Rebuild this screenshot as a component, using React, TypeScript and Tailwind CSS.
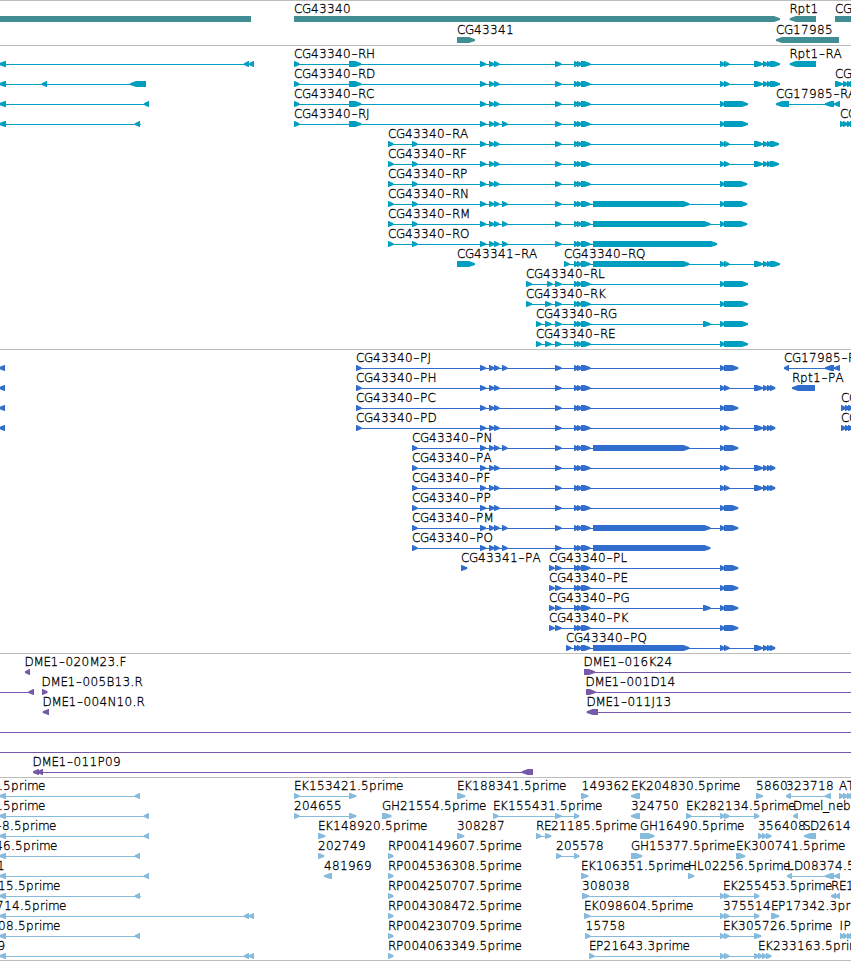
import React from "react";

// dir: 1 points right, -1 points left, 0 is a plain block
type Exon = [start: number, end: number];
type Feature = { label?: string; at?: number; dir: 1 | -1 | 0; line?: Exon; exons: Exon[] };
type Row = Feature[];

// Horizontal advance of each label character, in pixels
const ADVANCE: Record<string, number> = {
  A: 8, B: 8, C: 8, D: 9, E: 7, F: 7, G: 9, H: 9, I: 4, J: 4, K: 8, L: 7, M: 10, N: 9,
  O: 9, P: 7.5, Q: 9, R: 8, S: 7, T: 8, p: 8, t: 5, r: 5, i: 3, m: 11, e: 7, n: 8, b: 8,
  l: 3, _: 5, ".": 4, "-": 7,
};

function charPositions(text: string, start: number) {
  let x = start;
  return Array.from(text).map((c) => {
    const here = x;
    x += ADVANCE[c] ?? 8;
    return here;
  });
}

// Hyphens are set larger than the rest so that they read as a wide dash
function Label({ text, at }: { text: string; at: number }) {
  const xs = charPositions(text, at);
  const cut = text.indexOf("-");
  if (cut < 0) {
    return (
      <text x={xs.join(" ")} y="9" className="fill-black stroke-black [stroke-width:0.3px]">
        {text}
      </text>
    );
  }
  const before = text.slice(0, cut);
  return (
    <text y="9" className="fill-black stroke-black [stroke-width:0.3px]">
      {before && <tspan x={xs.slice(0, cut).join(" ")}>{before}</tspan>}
      <tspan x={xs[cut] + 0.3} y="10" className="text-[18px] [stroke-width:0.1px]">
        -
      </tspan>
      <tspan x={xs.slice(cut + 1).join(" ")} y="9">
        {text.slice(cut + 1)}
      </tspan>
    </text>
  );
}

function f(label: string, at: number, dir: 1 | -1 | 0, ...exons: Exon[]): Feature {
  return { label, at, dir, exons };
}

// The arrow head ends in a blunt tip just above the connecting line
function exonPoints([a, b]: Exon, dir: number, top: number) {
  const h = 6;
  const head = Math.min(b - a - 0.6, 6);
  const t1 = top + 2.2;
  const t2 = top + 4;
  if (dir === 0) return `${a},${top} ${b},${top} ${b},${top + h} ${a},${top + h}`;
  if (dir === 1)
    return `${a},${top} ${b - head},${top} ${b},${t1} ${b},${t2} ${b - head},${top + h} ${a},${top + h}`;
  return `${b},${top} ${a + head},${top} ${a},${t1} ${a},${t2} ${a + head},${top + h} ${b},${top + h}`;
}

function TrackRow({ row }: { row: Row }) {
  const top = 12;
  return (
    <svg width="851" height="20" className="block h-5 w-full shrink-0 overflow-visible">
      {row.map((ft, i) => {
        const span =
          ft.line ??
          (ft.exons.length > 1
            ? [ft.exons[0][0] + 2, ft.exons[ft.exons.length - 1][1] - 1]
            : null);
        return (
          <g key={i}>
            {span && (
              <rect x={span[0]} y={top + 3} width={span[1] - span[0]} height="1" fill="currentColor" />
            )}
            {ft.exons.map((e, j) => (
              <polygon key={j} points={exonPoints(e, ft.dir, top)} fill="currentColor" />
            ))}
            {ft.label && <Label text={ft.label} at={ft.at ?? ft.exons[0][0]} />}
          </g>
        );
      })}
    </svg>
  );
}

function Track({ rows, className }: { rows: Row[]; className: string }) {
  return (
    <section className={`flex shrink-0 flex-col border-t border-[#bdbdbd] pt-[3px] ${className}`}>
      {rows.map((r, i) => (
        <TrackRow key={i} row={r} />
      ))}
    </section>
  );
}

// Exons shared by the CG43340 splice variants
const mid: Exon[] = [[480, 486], [489, 494.5], [494, 499.5]];
const extra: Exon = [502, 507.5];
const f55: Exon = [555, 561.5];
const trio: Exon[] = [[574, 579], [577, 582], [581, 590.5]];
const pair: Exon[] = [[720, 725], [724, 729.5]];
const tail: Exon[] = [[754, 763], [763, 768], [767, 772]];
const stub: Exon = [720, 725];
const longN: Exon = [593, 689.5];
const longM: Exon = [593, 710.5];
const a0: Exon = [294, 299.5];
const b0: Exon = [349, 361.3];
const c0: Exon = [388, 393.5];
const d0: Exon = [412, 417.5];
const p0: Exon = [356, 361.5];
const edge: Exon = [-1, 6];

const left = (line: number, ...exons: Exon[]): Feature => ({ dir: -1, line: [0, line], exons: [edge, ...exons] });

const genes: Row[] = [
  [
    { dir: 0, exons: [[0, 251]] },
    f("CG43340", 294, 1, [294, 780]),
    f("Rpt1", 789.5, -1, [789.7, 816]),
    f("CG", 835, 1, [835, 900]),
  ],
  [f("CG43341", 457, 1, [457, 475]), f("CG17985", 776, -1, [776, 839])],
];

const transcripts: Row[] = [
  [
    left(254, [244, 249], [249, 254]),
    f("CG43340-RH", 294, 1, a0, b0, ...mid, f55, ...trio, ...pair, ...tail, [770, 780]),
    f("Rpt1-RA", 789.5, -1, [789.7, 816]),
  ],
  [
    left(146, [41.7, 47], [130, 146]),
    f("CG43340-RD", 294, 1, a0, b0, ...mid, f55, ...trio, ...pair, ...tail, [770, 780]),
    f("CG", 835, 1, [835, 843], [843, 848], [847, 853], [850, 856]),
  ],
  [
    left(149, [144, 149]),
    f("CG43340-RC", 294, 1, a0, b0, ...mid, f55, ...trio, stub, [724, 748]),
    f("CG17985-RA", 776, -1, [776, 789], [825, 834], [834, 840]),
  ],
  [
    left(141, [135, 140]),
    f("CG43340-RJ", 294, 1, a0, b0, ...mid, extra, f55, ...trio, stub, [724, 748]),
    f("CG", 840, 1, [840, 845], [843, 848], [847, 852], [850, 856]),
  ],
  [f("CG43340-RA", 388, 1, c0, d0, ...mid, f55, ...trio, ...pair, ...tail, [770, 779])],
  [f("CG43340-RF", 388, 1, c0, d0, ...mid, f55, ...trio, ...pair, ...tail, [770, 779])],
  [f("CG43340-RP", 388, 1, c0, d0, ...mid, f55, ...trio, stub, [724, 747.3])],
  [f("CG43340-RN", 388, 1, c0, d0, ...mid, extra, f55, ...trio, longN, stub, [724, 747.3])],
  [f("CG43340-RM", 388, 1, c0, d0, ...mid, extra, f55, ...trio, longM, stub, [724, 747.3])],
  [f("CG43340-RO", 388, 1, c0, d0, ...mid, extra, f55, ...trio, [593, 717.2])],
  [
    f("CG43341-RA", 457, 1, [457, 475]),
    f("CG43340-RQ", 564, 1, [564, 569.5], ...trio, longN, ...pair, ...tail, [770, 780]),
  ],
  [f("CG43340-RL", 526, 1, [526, 532], [547, 552.5], f55, ...trio, stub, [724, 748])],
  [f("CG43340-RK", 526, 1, [526, 532], [545, 551.5], f55, ...trio, stub, [724, 748])],
  [f("CG43340-RG", 536, 1, [536, 541.5], [545, 551.5], f55, ...trio, [703, 710.7], stub, [724, 748])],
  [f("CG43340-RE", 536, 1, [536, 541.5], [545, 551.5], f55, ...trio, stub, [724, 748])],
];

const end738: Exon[] = [stub, [724, 738.3]];
const end775: Exon[] = [...pair, ...tail, [770, 775.3]];
const clip: Feature = { dir: -1, exons: [[-1, 5]] };
const pStart: Exon = [549, 554.5];

const proteins: Row[] = [
  [
    clip,
    f("CG43340-PJ", 356, 1, p0, ...mid, extra, f55, ...trio, ...end738),
    f("CG17985-PA", 784, -1, [784, 789], [825, 834], [834, 840]),
  ],
  [clip, f("CG43340-PH", 356, 1, p0, ...mid, f55, ...trio, ...end775), f("Rpt1-PA", 792, -1, [792, 815])],
  [
    clip,
    f("CG43340-PC", 356, 1, p0, ...mid, f55, ...trio, ...end738),
    f("CG", 841, 1, [841, 846], [845, 850], [848, 854]),
  ],
  [
    clip,
    f("CG43340-PD", 356, 1, p0, ...mid, f55, ...trio, ...end775),
    f("CG", 841, 1, [841, 846], [845, 850], [848, 854]),
  ],
  [f("CG43340-PN", 412, 1, d0, ...mid, extra, f55, ...trio, longN, ...end738)],
  [f("CG43340-PA", 412, 1, d0, ...mid, f55, ...trio, ...end775)],
  [f("CG43340-PF", 412, 1, d0, ...mid, f55, ...trio, ...end775)],
  [f("CG43340-PP", 412, 1, d0, ...mid, f55, ...trio, ...end738)],
  [f("CG43340-PM", 412, 1, d0, ...mid, extra, f55, ...trio, longM, ...end738)],
  [f("CG43340-PO", 412, 1, d0, ...mid, extra, f55, ...trio, longM)],
  [f("CG43341-PA", 461, 1, [461, 467.3]), f("CG43340-PL", 549, 1, pStart, f55, ...trio, ...end738)],
  [f("CG43340-PE", 549, 1, pStart, f55, ...trio, ...end738)],
  [f("CG43340-PG", 549, 1, pStart, f55, ...trio, [703, 710.7], ...end738)],
  [f("CG43340-PK", 549, 1, pStart, f55, ...trio, ...end738)],
  [f("CG43340-PQ", 566, 1, [566, 571.5], ...trio, longN, ...end775)],
];

const clones: Row[] = [
  [
    f("DME1-020M23.F", 24.5, -1, [25, 30]),
    { label: "DME1-016K24", at: 583.5, dir: 1, line: [584, 851], exons: [[584, 595]] },
  ],
  [
    { dir: -1, line: [0, 30], exons: [[28.5, 34]] },
    f("DME1-005B13.R", 41.5, 1, [42, 47.5]),
    { label: "DME1-001D14", at: 585.5, dir: 1, line: [586, 851], exons: [[586, 595.5]] },
  ],
  [
    f("DME1-004N10.R", 42.5, -1, [42.7, 49]),
    { label: "DME1-011J13", at: 586.5, dir: -1, line: [590, 851], exons: [[586.7, 598]] },
  ],
  [{ dir: 0, line: [0, 851], exons: [] }],
  [{ dir: 0, line: [0, 851], exons: [] }],
  [
    { label: "DME1-011P09", at: 32.5, dir: -1, line: [36, 525], exons: [[33, 39], [37, 43]] },
    { dir: -1, exons: [[521.7, 533]] },
  ],
];

const text = (label: string, at: number): Feature => ({ label, at, dir: 0, exons: [] });
const l135: Exon = [134.7, 140];
const l144: Exon = [143.7, 149];
const far: Exon[] = [[244, 249], [248.7, 254]];
const end754: Exon[] = [...pair, [754, 759.3]];

const ests: Row[] = [
  [
    left(138, l135),
    text(".5prime", -1),
    f("EK153421.5prime", 294, 1, a0, [349, 356.3]),
    f("EK188341.5prime", 457, 1, [457, 465.3]),
    f("149362", 581.5, 1, [581, 588.3]),
    f("EK204830.5prime", 631, -1, [631, 640]),
    f("5860", 756, 1, [756, 763]),
    f("323718", 786, -1, [786, 791], [825, 831]),
    f("AT", 839, 1, [839, 844], [843, 848], [847, 852], [850, 856]),
  ],
  [
    left(147, l144),
    text(".5prime", -1),
    f("204655", 294, 1, a0, [349, 356.3]),
    f("GH21554.5prime", 382, 1, [382, 391.5]),
    f("EK155431.5prime", 493, 1, [493, 498.5], f55, [574, 579.3]),
    f("324750", 631, -1, [631, 640]),
    f("EK282134.5prime", 686, 1, [686, 691.5], ...end754),
    f("Dmel_neb", 793, -1, [793, 798]),
  ],
  [
    left(147, l144),
    text("-8.5prime", -5),
    f("EK148920.5prime", 318, 1, [318, 325.3]),
    f("308287", 457, 1, [457, 464.3]),
    f("RE21185.5prime", 536, 1, [536, 541.5], [545, 551.3]),
    f("GH16490.5prime", 640, 1, [640, 654.5]),
    f("356408", 758, 1, [758, 763], [762, 767], [766, 771.5]),
    f("SD2614", 803, -1, [804, 816]),
  ],
  [
    left(138, l135),
    text("46.5prime", -5),
    f("202749", 318, 1, [318, 324.3]),
    f("RP004149607.5prime", 388, 1, c0),
    f("205578", 556, 1, [556, 561.5], [574, 579.3]),
    f("GH15377.5prime", 631, 1, [631, 642.3]),
    f("EK300741.5prime", 736, 1, [736, 745.3]),
  ],
  [
    left(147, l144),
    text("1", -3),
    f("481969", 324, -1, [324, 332]),
    f("RP004536308.5prime", 388, 1, c0),
    f("EK106351.5prime", 581, 1, [581, 588.3]),
    f("HL02256.5prime", 688, 1, [688, 694.3]),
    f("LD08374.5", 787, -1, [787, 792], [825, 834], [834, 840]),
  ],
  [
    left(141, l135),
    text("15.5prime", -2),
    f("RP004250707.5prime", 388, 1, c0),
    f("308038", 582, 1, [582, 589.3], ...end754),
    text("EK255453.5prime", 723),
    f("RE1", 831, -1, [831, 836], [835, 840]),
  ],
  [
    left(254, ...far),
    text("714.5prime", -4),
    f("RP004308472.5prime", 388, 1, c0),
    f("EK098604.5prime", 584, 1, [584, 590.3], ...end754),
    text("375514", 723),
    f("EP17342.3pr", 771, 1, [771, 779.3]),
  ],
  [
    left(138, l135),
    text("08.5prime", -2),
    f("RP004230709.5prime", 388, 1, c0),
    f("15758", 585.5, 1, [585, 590.5], ...pair, [754, 761.3]),
    text("EK305726.5prime", 723),
    f("IP", 839.5, 1, [840, 845], [843, 848], [847, 852], [850, 856]),
  ],
  [
    left(254, ...far),
    text("9", -2.5),
    f("RP004063349.5prime", 388, 1, c0),
    f("EP21643.3prime", 589, 1, [589, 594.5], ...pair, [754, 759], [758, 763], [762, 767], [766, 771.5]),
    text("EK233163.5prime", 758),
  ],
];

export default function App() {
  return (
    <main className="flex h-[961px] w-[851px] flex-col overflow-hidden border-b border-[#bdbdbd] bg-white font-['DejaVu_Sans',sans-serif] text-[12px] font-extralight">
      <Track rows={genes} className="h-[45px] gap-px text-[#408d93]" />
      <Track rows={transcripts} className="h-[304px] text-[#009fc0]" />
      <Track rows={proteins} className="h-[304px] text-[#306dcc]" />
      <Track rows={clones} className="h-[124px] text-[#7659a8]" />
      <Track rows={ests} className="h-[183px] text-[#87bbdd]" />
    </main>
  );
}
